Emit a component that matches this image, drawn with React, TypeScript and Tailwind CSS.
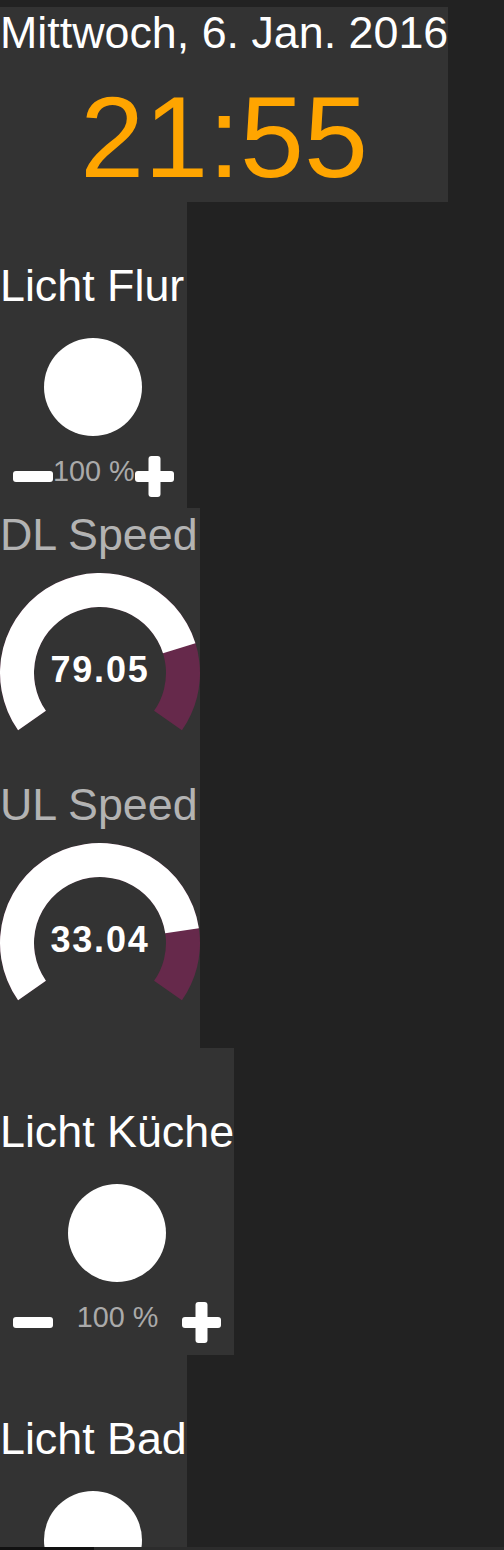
const FONT = "font-['Liberation_Sans',Arial,sans-serif]";

// gauge geometry: arc runs from 215deg down to -35deg (250deg total)
const START = 215;
const SWEEP = 250;

function pt(a: number, rad: number) {
  const t = (a * Math.PI) / 180;
  return [100 + rad * Math.cos(t), 100 - rad * Math.sin(t)];
}

function sector(a1: number, a2: number, R = 100, r = 66) {
  const large = a1 - a2 > 180 ? 1 : 0;
  const [x1, y1] = pt(a1, R);
  const [x2, y2] = pt(a2, R);
  const [x3, y3] = pt(a2, r);
  const [x4, y4] = pt(a1, r);
  return `M${x1} ${y1} A${R} ${R} 0 ${large} 1 ${x2} ${y2} L${x3} ${y3} A${r} ${r} 0 ${large} 0 ${x4} ${y4}Z`;
}

function Gauge({ title, value, max }: { title: string; value: number; max: number }) {
  const end = START - SWEEP * (value / max);
  return (
    <div className="bg-[#333333] h-[270px] shrink-0 flex flex-col">
      <div className="text-[44.8px] leading-[52px] text-[#b3b3b3] whitespace-nowrap">{title}</div>
      <svg width="200" height="160" viewBox="0 0 200 160" className="mt-[13px] block">
        <path d={sector(START, START - SWEEP)} fill="#66294b" />
        <path d={sector(START, end)} fill="#ffffff" />
        <text
          x="100"
          y="109"
          textAnchor="middle"
          fill="#ffffff"
          fontWeight="bold"
          fontSize="36"
          letterSpacing="1.8"
          fontFamily="'Liberation Sans', Arial, sans-serif"
        >
          {value.toFixed(2)}
        </text>
      </svg>
    </div>
  );
}

function Minus() {
  return (
    <svg width="40" height="11" viewBox="0 0 40 11" className="block shrink-0">
      <rect x="0" y="0" width="40" height="11" rx="3" fill="#ffffff" />
    </svg>
  );
}

function Plus() {
  return (
    <svg width="39" height="41" viewBox="0 0 39 41" className="block shrink-0">
      <rect x="0" y="15" width="39" height="11" rx="3" fill="#ffffff" />
      <rect x="13.5" y="0" width="12" height="41" rx="3" fill="#ffffff" />
    </svg>
  );
}

function Light({ title, h, controls = true }: { title: string; h: string; controls?: boolean }) {
  return (
    <div className={`bg-[#333333] shrink-0 flex flex-col items-stretch pt-[57px] ${h}`}>
      <div className="text-[44.8px] leading-[52px] text-white whitespace-nowrap">{title}</div>
      <div className="mt-[27px] self-center w-[98px] h-[98px] shrink-0 rounded-full bg-white" />
      {controls && (
        <div className="mt-[20px] px-[13px] flex items-center justify-between">
          <Minus />
          <span className="text-[28.8px] leading-none text-[#aaaaaa] whitespace-nowrap mb-[11px]">100 %</span>
          <Plus />
        </div>
      )}
    </div>
  );
}

export default function App() {
  return (
    <div className={`bg-[#222222] w-[504px] h-[1550px] flex flex-col ${FONT}`}>
      <div className="h-[1547px] shrink-0 overflow-hidden pt-[7px] flex flex-col items-start">
        {/* clock */}
        <div className="bg-[#333333] h-[195px] shrink-0 flex flex-col items-center">
          <div className="text-[44.8px] leading-[51px] text-white whitespace-nowrap">Mittwoch, 6. Jan. 2016</div>
          <div className="mt-[22px] text-[115px] leading-none text-[#ffa500] whitespace-nowrap">21:55</div>
        </div>

        <Light title="Licht Flur" h="h-[306px]" />
        <Gauge title="DL Speed" value={79.05} max={100} />
        <Gauge title="UL Speed" value={33.04} max={40} />
        <Light title="Licht Küche" h="h-[307px]" />
        {/* last tile runs past the bottom edge, controls are out of view */}
        <Light title="Licht Bad" h="h-[306px]" controls={false} />
      </div>

      {/* scrollbar strip */}
      <div className="h-[3px] shrink-0 flex">
        <div className="w-[94px] bg-[#111111]" />
        <div className="flex-1 bg-[#2c2c2c]" />
      </div>
    </div>
  );
}
